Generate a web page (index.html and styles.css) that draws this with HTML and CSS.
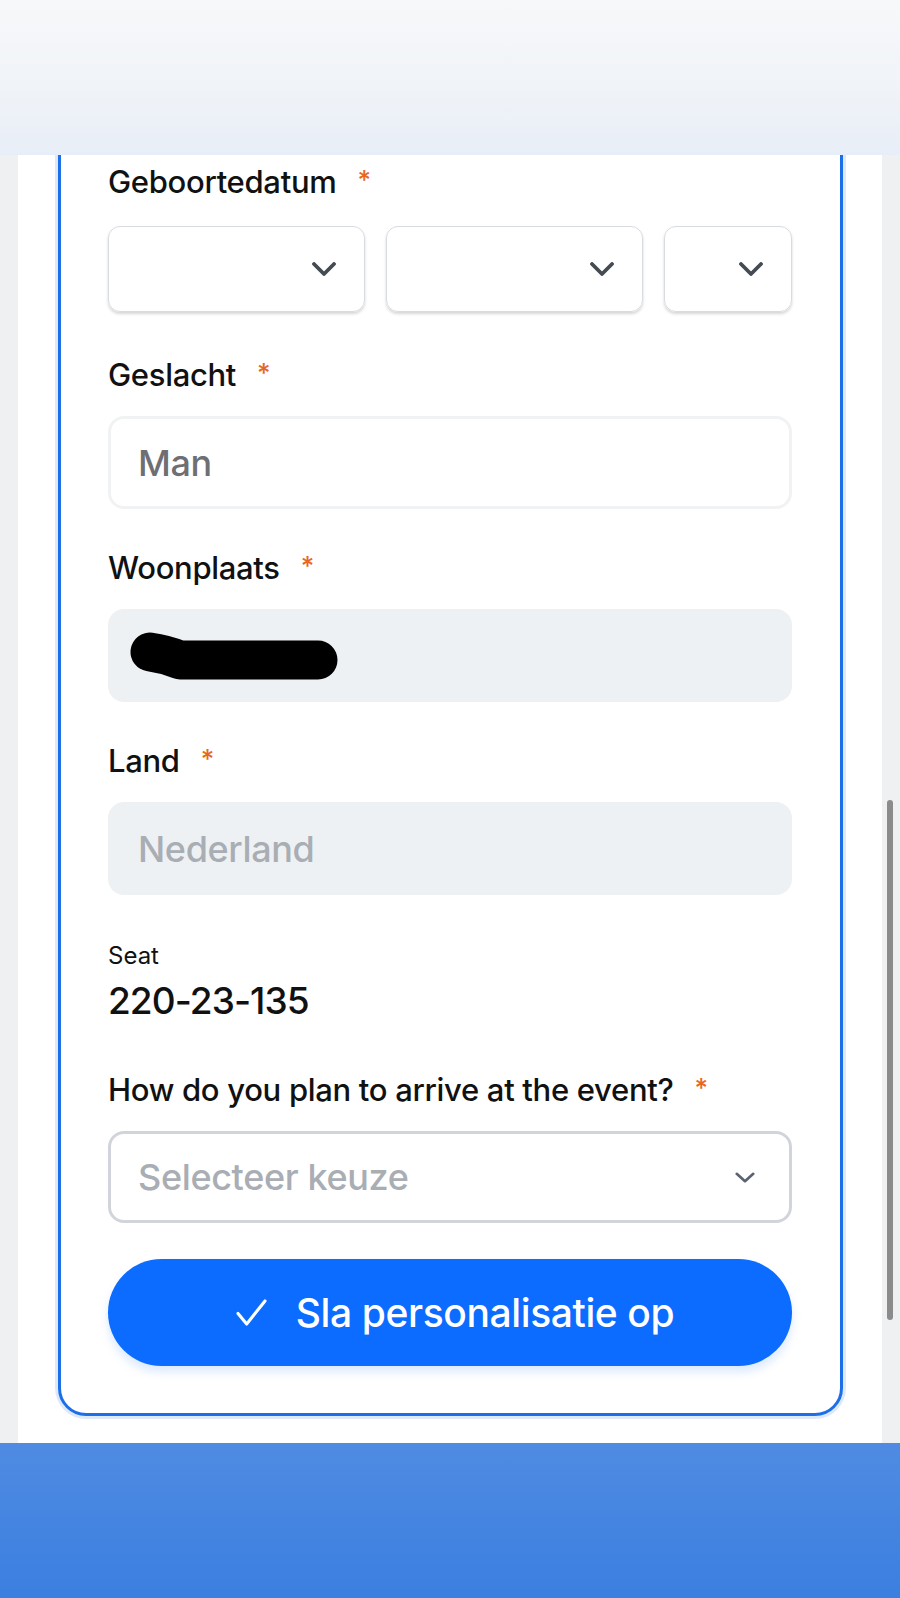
FILE: index.html
```html
<!DOCTYPE html>
<html lang="nl">
<head>
    <meta charset="UTF-8">
    <meta name="viewport" content="width=device-width, initial-scale=1.0">
    <title>Personalisatie</title>
    <link rel="stylesheet" href="styles.css">
</head>
<body>
    <div class="top-bar"></div>

    <div class="page">
        <form class="card">
            <div class="field field-date">
                <label class="label">Geboortedatum<span class="req">*</span></label>
                <div class="date-row">
                    <div class="date-select">
                        <svg class="chevron" viewBox="0 0 24 14"><path d="M2 2 L12 12 L22 2"/></svg>
                    </div>
                    <div class="date-select">
                        <svg class="chevron" viewBox="0 0 24 14"><path d="M2 2 L12 12 L22 2"/></svg>
                    </div>
                    <div class="date-select">
                        <svg class="chevron" viewBox="0 0 24 14"><path d="M2 2 L12 12 L22 2"/></svg>
                    </div>
                </div>
            </div>

            <div class="field">
                <label class="label">Geslacht<span class="req">*</span></label>
                <div class="input input-white">Man</div>
            </div>

            <div class="field">
                <label class="label">Woonplaats<span class="req">*</span></label>
                <div class="input input-grey">
                    <!-- redacted value -->
                    <svg class="redacted" viewBox="0 0 208 48"><path d="M20 20 Q35 22 50 28 L188 28"/></svg>
                </div>
            </div>

            <div class="field">
                <label class="label">Land<span class="req">*</span></label>
                <div class="input input-grey placeholder">Nederland</div>
            </div>

            <div class="seat">
                <div class="seat-label">Seat</div>
                <div class="seat-number">220-23-135</div>
            </div>

            <div class="field field-last">
                <label class="label">How do you plan to arrive at the event?<span class="req">*</span></label>
                <div class="input input-select placeholder">
                    <span>Selecteer keuze</span>
                    <svg class="chevron chevron-small" viewBox="0 0 24 14"><path d="M3 3 L12 11 L21 3"/></svg>
                </div>
            </div>

            <button type="button" class="save-btn">
                <svg class="check" viewBox="0 0 32 28"><path d="M2 15 L11 26 L30 2"/></svg>
                Sla personalisatie op
            </button>
        </form>

        <div class="card card-next"></div>
    </div>

    <div class="bottom-bar"></div>
    <div class="scrollbar"></div>
</body>
</html>
```

FILE: styles.css
```css
body {
    margin: 0;
    background-color: #eef0f2;
    font-family: Inter, "Liberation Sans", Arial, sans-serif;
    color: #111111;
}

.top-bar {
    position: fixed;
    top: 0;
    left: 0;
    right: 0;
    height: 155px;
    background: linear-gradient(#f7f8fa, #f1f4f8 50%, #e8eef7);
    z-index: 10;
}

.page {
    margin: 0 18px;
    background-color: #ffffff;
    padding: 100px 39px 200px 40px;
}

.card {
    background-color: #ffffff;
    border: 3px solid #1d6fe8;
    border-radius: 28px;
    box-shadow: 0 0 0 3px #dde9fb;
    padding: 59px 48px 47px 47px;
}

.card-next {
    margin-top: 28px;
    height: 120px;
    border: 1px solid #eceef1;
    box-shadow: 0 -1px 2px rgba(0, 0, 0, 0.04);
    padding: 0;
}

.field {
    margin-bottom: 39px;
}

.field-date {
    margin-bottom: 43px;
}

.field-last {
    margin-bottom: 36px;
}

.label {
    display: block;
    font-size: 31px;
    line-height: 36px;
    font-weight: 500;
    letter-spacing: -0.01em;
    margin-bottom: 23px;
}

.req {
    color: #e8671e;
    font-size: 26px;
    margin-left: 21px;
    vertical-align: 4px;
}

.date-row {
    display: grid;
    grid-template-columns: 2fr 2fr 1fr;
    gap: 21px;
    padding-top: 3px;
}

.date-select {
    height: 84px;
    border: 1px solid #d8dbe0;
    border-radius: 12px;
    box-shadow: 0 2px 3px rgba(0, 0, 0, 0.16);
    display: flex;
    align-items: center;
    justify-content: flex-end;
    padding-right: 28px;
}

.chevron {
    width: 24px;
    height: 14px;
    fill: none;
    stroke: #454b53;
    stroke-width: 3.8;
    stroke-linecap: round;
    stroke-linejoin: round;
}

.chevron-small {
    width: 22px;
    height: 13px;
    stroke: #5a6370;
    stroke-width: 3;
}

.input {
    height: 93px;
    box-sizing: border-box;
    border-radius: 16px;
    padding: 0 30px;
    display: flex;
    align-items: center;
    font-size: 36px;
    font-weight: 500;
    letter-spacing: -0.01em;
}

.input-white {
    border: 3px solid #f0f2f4;
    padding-left: 27px;
    color: #6d6f73;
}

.input-grey {
    background-color: #eef1f3;
}

.input-select {
    height: 92px;
    border: 3px solid #d1d5db;
    padding: 0 33px 0 27px;
    justify-content: space-between;
}

.placeholder {
    color: #a9adb4;
}

.redacted {
    width: 208px;
    height: 48px;
    margin-left: -8px;
    fill: none;
    stroke: #000000;
    stroke-width: 39;
    stroke-linecap: round;
    stroke-linejoin: round;
}

.seat {
    margin-top: 46px;
    margin-bottom: 47px;
}

.seat-label {
    font-size: 24px;
    line-height: 30px;
}

.seat-number {
    font-size: 37px;
    line-height: 44px;
    font-weight: 500;
    letter-spacing: -0.025em;
    margin-top: 8px;
}

.save-btn {
    width: 100%;
    height: 107px;
    border: none;
    border-radius: 54px;
    background-color: #0b6cff;
    color: #ffffff;
    font-family: inherit;
    font-size: 39px;
    font-weight: 500;
    letter-spacing: -0.01em;
    display: flex;
    align-items: center;
    justify-content: center;
    gap: 29px;
    box-shadow: 0 6px 10px rgba(11, 108, 255, 0.15);
    padding: 0 0 0 10px;
}

.check {
    width: 31px;
    height: 27px;
    fill: none;
    stroke: #ffffff;
    stroke-width: 3.2;
    stroke-linecap: round;
    stroke-linejoin: round;
}

.bottom-bar {
    position: fixed;
    left: 0;
    right: 0;
    bottom: 0;
    height: 155px;
    background: linear-gradient(#4f8be2, #3b7fe0);
    z-index: 10;
}

.scrollbar {
    position: fixed;
    right: 7px;
    top: 800px;
    width: 6px;
    height: 520px;
    border-radius: 3px;
    background-color: #8b8b8b;
    z-index: 11;
}
```
